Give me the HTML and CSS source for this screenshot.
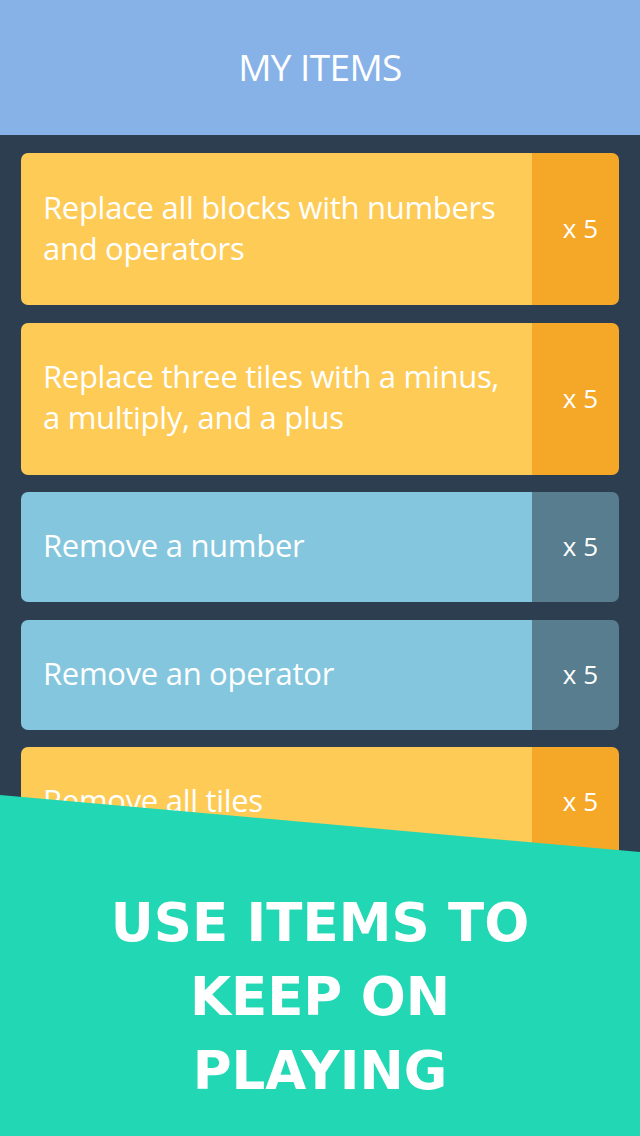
FILE: index.html
```html
<!DOCTYPE html>
<html>
<head>
<meta charset="utf-8">
<link rel="stylesheet" href="styles.css">
</head>
<body>
<div class="screen">
  <header class="top">MY ITEMS</header>
  <main class="list">
    <div class="card yellow tall">
      <div class="label">Replace all blocks with numbers and operators</div>
      <div class="count">x 5</div>
    </div>
    <div class="card yellow tall">
      <div class="label">Replace three tiles with a minus, a multiply, and a plus</div>
      <div class="count">x 5</div>
    </div>
    <div class="card blue">
      <div class="label">Remove a number</div>
      <div class="count">x 5</div>
    </div>
    <div class="card blue">
      <div class="label">Remove an operator</div>
      <div class="count">x 5</div>
    </div>
    <div class="card yellow">
      <div class="label">Remove all tiles</div>
      <div class="count">x 5</div>
    </div>
  </main>
  <div class="banner">
    <p class="promo">USE ITEMS TO<br>KEEP ON<br>PLAYING</p>
  </div>
</div>
</body>
</html>
```
FILE: styles.css
```css
* { box-sizing: border-box; }
html, body { margin: 0; padding: 0; }
body {
  width: 640px;
  height: 1136px;
  overflow: hidden;
  background: #2e3e51;
  font-family: "Open Sans", "Liberation Sans", sans-serif;
}
.screen {
  position: relative;
  width: 640px;
  height: 1136px;
  display: flex;
  flex-direction: column;
}
.top {
  height: 135px;
  background: #87b2e7;
  color: #fff;
  font-size: 37px;
  letter-spacing: -0.6px;
  display: flex;
  align-items: center;
  justify-content: center;
  padding-bottom: 2px;
}
.list {
  display: flex;
  flex-direction: column;
  gap: 17.5px;
  padding: 18px 21px 0 21px;
}
.card {
  display: flex;
  height: 110px;
  border-radius: 7px;
  overflow: hidden;
  color: #fff;
}
.card.tall { height: 152px; }
.label {
  flex: 1;
  display: flex;
  align-items: center;
  padding: 0 10px 0 22px;
  font-size: 31px;
  line-height: 41px;
  letter-spacing: -0.3px;
  padding-bottom: 3px;
}
.count {
  width: 87px;
  display: flex;
  align-items: center;
  justify-content: flex-end;
  padding-right: 21px;
  font-size: 26px;
  padding-bottom: 2px;
}
.yellow .label { background: #fdcb56; }
.yellow .count { background: #f5a828; }
.blue .label { background: #84c6dd; }
.blue .count { background: #577d8e; }
.banner {
  position: absolute;
  left: 0;
  right: 0;
  bottom: 0;
  height: 341px;
  background: #22d7b4;
  clip-path: polygon(0 0, 100% 57px, 100% 100%, 0 100%);
  display: flex;
  justify-content: center;
}
.promo {
  margin: 91px 0 0;
  color: #fff;
  font-family: "DejaVu Sans", "Liberation Sans", sans-serif;
  font-weight: bold;
  font-size: 53px;
  line-height: 74px;
  text-align: center;
}
```
